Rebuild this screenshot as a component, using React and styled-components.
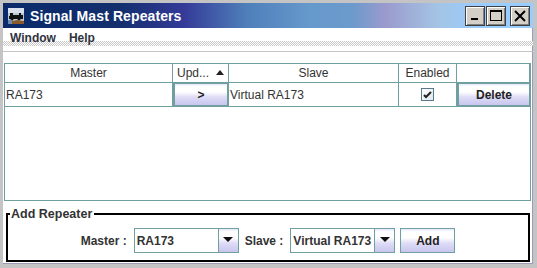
import React from 'react';
import styled, { createGlobalStyle } from 'styled-components';

const GlobalStyle = createGlobalStyle`
  html, body {
    margin: 0;
    padding: 0;
    background: #fff;
  }
  * {
    box-sizing: border-box;
  }
`;

const TEXT = '#333333';
const GRID = '#6f9f9f';
const FONT = `"Liberation Sans", Arial, sans-serif`;

const Window = styled.div`
  width: 537px;
  height: 268px;
  display: flex;
  flex-direction: column;
  background: #fff;
  border-style: solid;
  border-color: #c4c4c4;
  border-width: 3px 4px 4px 3px;
  box-shadow: inset -1px -1px 0 #9c9cb8;
  font-family: ${FONT};
  color: ${TEXT};
  overflow: hidden;
`;

const TitleBar = styled.div`
  height: 25px;
  flex: none;
  display: flex;
  align-items: center;
  padding: 0 3px 0 5px;
  background: linear-gradient(
    90deg,
    #0a2a6a 0%,
    #132f6e 22%,
    #343a98 34%,
    #4f7fba 46%,
    #6699cc 58%,
    #6c9acc 66%,
    #9a9acc 72%,
    #a4c4e4 82%,
    #99ccff 90%,
    #99ccff 100%
  );
`;

const TitleText = styled.span`
  color: #fff;
  font-weight: bold;
  font-size: 14px;
  margin-left: 6px;
  flex: 1;
  letter-spacing: 0.1px;
`;

const Controls = styled.div`
  display: flex;
  gap: 1px;
`;

const CtrlButton = styled.div`
  width: 20px;
  height: 20px;
  margin-left: ${({ $gap }) => ($gap ? '3px' : '0')};
  background: #d4d0c8;
  border: 1px solid #404040;
  box-shadow: inset 1px 1px 0 #fff, inset -1px -1px 0 #808080;
  display: flex;
  align-items: center;
  justify-content: center;
`;

const MenuBar = styled.div`
  height: 23px;
  flex: none;
  display: flex;
  align-items: flex-start;
  padding: 3px 0 0 1px;
  position: relative;
  &::after {
    content: '';
    position: absolute;
    left: 0;
    right: 0;
    top: 13px;
    height: 5px;
    background: repeating-conic-gradient(#c8c8c8 0% 25%, #fff 0% 50%) 0 0 / 2px 2px;
    z-index: 0;
  }
`;

const MenuItem = styled.span`
  position: relative;
  z-index: 1;
  font-weight: bold;
  font-size: 12px;
  color: #2f3340;
  padding: 0 6px;
  margin-right: 1px;
`;

const Divider = styled.div`
  height: 1px;
  flex: none;
  background: #c4c4c4;
  margin-bottom: 11px;
`;

const Body = styled.div`
  flex: 1;
  display: flex;
  flex-direction: column;
  padding: 0 2px 0 1px;
`;

const TableBox = styled.div`
  height: 138px;
  border: 1px solid ${GRID};
`;

const Grid = styled.div`
  display: grid;
  grid-template-columns: 168px 56px 170px 58px 1fr;
  grid-template-rows: 19px 24px;
`;

const HeadCell = styled.div`
  border-right: 1px solid ${GRID};
  border-bottom: 1px solid ${GRID};
  display: flex;
  align-items: center;
  justify-content: ${({ $left }) => ($left ? 'flex-start' : 'center')};
  padding: 0 4px;
  font-size: 12px;
  &:last-child {
    border-right: none;
  }
`;

const Cell = styled.div`
  border-right: 1px solid ${GRID};
  border-bottom: 1px solid ${GRID};
  display: flex;
  align-items: center;
  justify-content: ${({ $center }) => ($center ? 'center' : 'flex-start')};
  padding: 0 1px;
  font-size: 12px;
`;

const SortArrow = styled.span`
  width: 0;
  height: 0;
  border-left: 4px solid transparent;
  border-right: 4px solid transparent;
  border-bottom: 5px solid #222;
  margin-left: 7px;
  margin-top: -2px;
`;

const buttonFace = `
  background: linear-gradient(
    180deg,
    #e4e8fa 0%,
    #ffffff 12%,
    #ffffff 38%,
    #dedcf6 62%,
    #c8c6ee 100%
  );
`;

const CellButton = styled.div`
  height: 100%;
  width: 100%;
  ${buttonFace}
  border: 1px solid ${GRID};
  border-left-width: 2px;
  display: flex;
  align-items: center;
  justify-content: center;
  font-weight: bold;
  font-size: 12px;
  color: #222;
`;

const Check = styled.div`
  width: 13px;
  height: 13px;
  border: 1px solid #5a7a8a;
  background: linear-gradient(135deg, #fff, #dfe6f0);
  display: flex;
  align-items: center;
  justify-content: center;
`;

const AddPanel = styled.fieldset`
  margin: 6px 1px 0 2px;
  padding: 7px 0 0;
  height: 55px;
  border: 2px solid #000;
  display: flex;
  justify-content: center;
  align-items: flex-start;
  & > legend {
    font-weight: bold;
    font-size: 12.5px;
    color: ${TEXT};
    padding: 0 2px 0 1px;
    margin-left: 2px;
  }
`;

const FormRow = styled.div`
  display: flex;
  align-items: center;
  gap: 5px;
`;

const Label = styled.span`
  font-weight: bold;
  font-size: 12px;
  margin: 0 2px 0 ${({ $lead }) => $lead || 0}px;
`;

const Combo = styled.div`
  width: 105px;
  height: 25px;
  display: flex;
  border: 1px solid ${GRID};
  background: #fff;
`;

const ComboText = styled.div`
  flex: 1;
  display: flex;
  align-items: center;
  padding-left: 2px;
  font-weight: bold;
  font-size: 12px;
  border-right: 1px solid ${GRID};
  white-space: nowrap;
`;

const ComboArrow = styled.div`
  width: 19px;
  ${buttonFace}
  display: flex;
  align-items: center;
  justify-content: center;
  &::before {
    content: '';
    border-left: 5px solid transparent;
    border-right: 5px solid transparent;
    border-top: 5px solid #111;
    margin-top: -3px;
  }
`;

const AddButton = styled.div`
  width: 55px;
  height: 25px;
  ${buttonFace}
  border: 1px solid ${GRID};
  display: flex;
  align-items: center;
  justify-content: center;
  font-weight: bold;
  font-size: 12px;
  color: #222;
`;

function AppIcon() {
  return (
    <svg width="16" height="16" viewBox="0 0 16 16">
      <rect x="0" y="0" width="16" height="16" fill="#b8c8d8" />
      <rect x="0" y="0" width="16" height="5" fill="#d8e0ec" />
      <path d="M2 5h3v2h6V5h2v2h2v4H1V8h1z" fill="#111" />
      <circle cx="4" cy="11" r="1.5" fill="#111" />
      <circle cx="11" cy="11" r="1.5" fill="#111" />
      <path d="M4 13L9 12L16 13V16H4Z" fill="#8a5a2a" />
      <path d="M0 12h4v4H0z" fill="#6a8ab0" />
    </svg>
  );
}

function App() {
  return (
    <>
      <GlobalStyle />
      <Window>
        <TitleBar>
          <AppIcon />
          <TitleText>Signal Mast Repeaters</TitleText>
          <Controls>
            <CtrlButton>
              <svg width="10" height="10" viewBox="0 0 10 10">
                <rect x="1" y="7" width="7" height="2" fill="#000" />
              </svg>
            </CtrlButton>
            <CtrlButton>
              <svg width="12" height="11" viewBox="0 0 12 11">
                <rect x="0.5" y="0.5" width="11" height="10" fill="none" stroke="#000" />
                <rect x="0" y="0" width="12" height="2" fill="#000" />
              </svg>
            </CtrlButton>
            <CtrlButton $gap>
              <svg width="12" height="12" viewBox="0 0 12 12">
                <path d="M1 1L11 11M11 1L1 11" stroke="#000" strokeWidth="2" />
              </svg>
            </CtrlButton>
          </Controls>
        </TitleBar>
        <MenuBar>
          <MenuItem>Window</MenuItem>
          <MenuItem>Help</MenuItem>
        </MenuBar>
        <Divider />
        <Body>
          <TableBox>
            <Grid>
              <HeadCell>Master</HeadCell>
              <HeadCell $left>
                Upd...
                <SortArrow />
              </HeadCell>
              <HeadCell>Slave</HeadCell>
              <HeadCell>Enabled</HeadCell>
              <HeadCell />
              <Cell>RA173</Cell>
              <Cell style={{ padding: 0 }}>
                <CellButton>&gt;</CellButton>
              </Cell>
              <Cell>Virtual RA173</Cell>
              <Cell $center>
                <Check>
                  <svg width="9" height="9" viewBox="0 0 9 9">
                    <path d="M1 5L3 7L8 2" stroke="#222" strokeWidth="2" fill="none" />
                  </svg>
                </Check>
              </Cell>
              <Cell style={{ padding: 0, borderRight: 'none' }}>
                <CellButton>Delete</CellButton>
              </Cell>
            </Grid>
          </TableBox>
          <AddPanel>
            <legend>Add Repeater</legend>
            <FormRow>
              <Label>Master :</Label>
              <Combo>
                <ComboText>RA173</ComboText>
                <ComboArrow />
              </Combo>
              <Label $lead={1}>Slave :</Label>
              <Combo>
                <ComboText>Virtual RA173</ComboText>
                <ComboArrow />
              </Combo>
              <AddButton>Add</AddButton>
            </FormRow>
          </AddPanel>
        </Body>
      </Window>
    </>
  );
}

export default App;
